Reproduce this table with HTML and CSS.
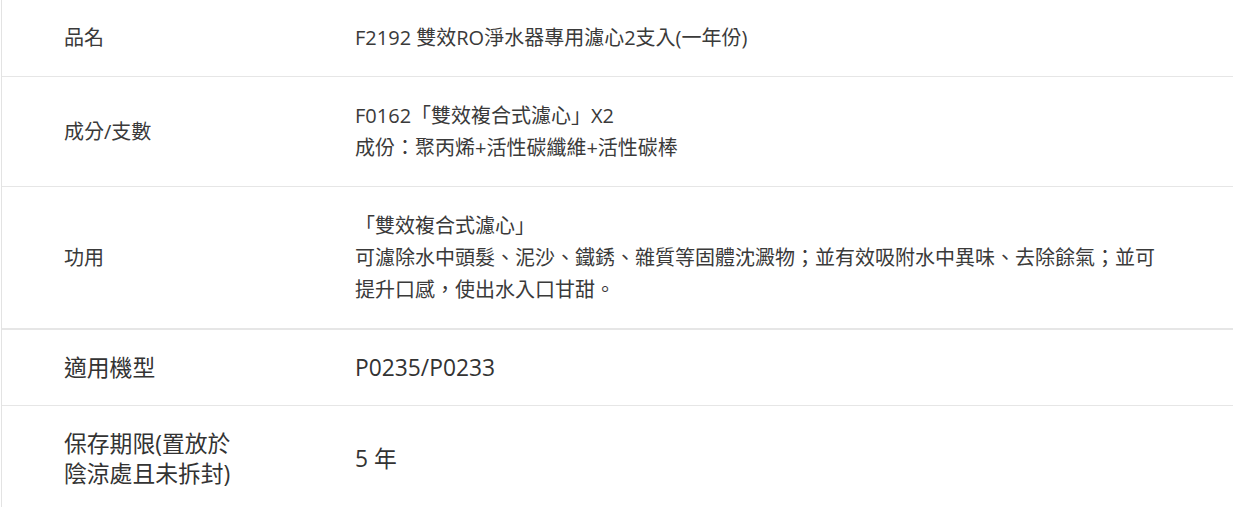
FILE: index.html
```html
<!DOCTYPE html>
<html>
<head>
    <title>商品規格</title>
    <link rel="stylesheet" href="styles.css">
</head>
<body>
    <div class="spec">
        <table class="spec-table">
            <tr class="first">
                <th>品名</th>
                <td>F2192 雙效RO淨水器專用濾心2支入(一年份)</td>
            </tr>
            <tr>
                <th>成分/支數</th>
                <td>F0162「雙效複合式濾心」X2<br>成份：聚丙烯+活性碳纖維+活性碳棒</td>
            </tr>
            <tr>
                <th>功用</th>
                <td>「雙效複合式濾心」<br>可濾除水中頭髮、泥沙、鐵銹、雜質等固體沈澱物；並有效吸附水中異味、去除餘氣；並可提升口感，使出水入口甘甜。</td>
            </tr>
        </table>
        <table class="spec-table spec-table--large">
            <tr class="first">
                <th>適用機型</th>
                <td>P0235/P0233</td>
            </tr>
            <tr>
                <th>保存期限(置放於陰涼處且未拆封)</th>
                <td>5 年</td>
            </tr>
        </table>
    </div>
</body>
</html>
```

FILE: styles.css
```css
* {
    padding: 0;
    margin: 0;
    box-sizing: border-box;
}
body {
    width: 100%;
    font-family: "Open Sans", "Noto Sans CJK TC", sans-serif;
    background-color: #ffffff;
    color: #3a3a3a;
}
.spec {
    margin-left: 1px;
    border-left: 1px solid #e3e3e3;
}
.spec-table {
    width: 100%;
    border-collapse: collapse;
    table-layout: fixed;
    font-size: 20px;
    line-height: 32px;
}
.spec-table th,
.spec-table td {
    text-align: left;
    font-weight: normal;
    vertical-align: middle;
    padding: 23px 0 22px;
    border-bottom: 1px solid #e6e6e6;
}
.spec-table .first th,
.spec-table .first td {
    padding-top: 22px;
}
.spec-table th {
    width: 353px;
    padding-left: 62px;
    padding-right: 120px;
}
.spec-table td {
    padding-right: 70px;
}
.spec-table--large {
    border-top: 1px solid #e6e6e6;
    font-size: 22.8px;
    line-height: 30px;
    color: #333333;
}
.spec-table--large th,
.spec-table--large td {
    padding-top: 23px;
    padding-bottom: 23px;
}
.spec-table--large .first th,
.spec-table--large .first td {
    padding-top: 23px;
    padding-bottom: 22px;
}
.spec-table--large th {
    padding-left: 62px;
    padding-right: 115px;
}
```
